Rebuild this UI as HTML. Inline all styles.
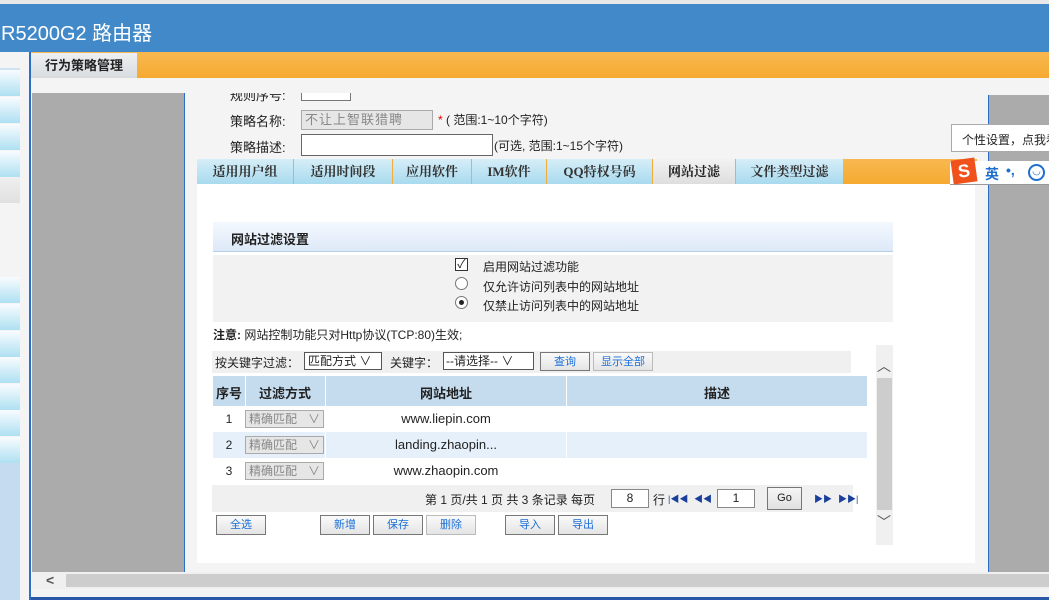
<!DOCTYPE html>
<html><head><meta charset="utf-8"><style>
*{margin:0;padding:0;box-sizing:border-box}
body{width:1049px;height:600px;overflow:hidden;position:relative;background:#f4f4f4;font-family:"Liberation Sans","Noto Sans CJK SC",sans-serif;font-size:12px;color:#222}
.a{position:absolute}
.t{white-space:nowrap}
.side{left:0;width:20px;height:26px;background:linear-gradient(#f8fcff,#aee0f2)}
.tab{top:159px;height:25px;background:linear-gradient(#d6eef8,#a8daee);border-left:1px solid #f2ad3c;font-weight:bold;font-size:13px;color:#333;text-align:center;line-height:25px;font-family:"Liberation Serif","Noto Serif CJK SC",serif}
.btn{top:515px;height:20px;background:linear-gradient(#fafafa,#e4e4e4);border:1px solid #777;color:#1a6fd8;font-size:11px;text-align:center;line-height:18px}
.sel{height:18px;border:1px solid #aaa;background:#e6e6e6;color:#888;font-size:12px;line-height:16px;padding-left:3px}
.sel:after{content:"\2228";position:absolute;right:3px;top:0;color:#888}
.cell{text-align:center;line-height:26px}
</style></head><body>
<div class="a" style="left:0;top:0;width:1049px;height:4px;background:#e8e8e8"></div>
<div class="a" style="left:0;top:4px;width:1049px;height:48px;background:#4189c8"></div>
<div class="a t" style="left:1px;top:17px;font-size:20px;color:#fff">R5200G2 路由器</div>
<!-- sidebar -->
<div class="a" style="left:0;top:68px;width:20px;height:2px;background:#cfe3f2"></div>
<div class="a side" style="top:70px"></div><div class="a side" style="top:97px"></div><div class="a side" style="top:124px"></div><div class="a side" style="top:151px"></div>
<div class="a" style="left:0;top:177px;width:20px;height:26px;background:linear-gradient(#f0f0f0,#e0e0e0)"></div>
<div class="a side" style="top:277px"></div><div class="a side" style="top:304px"></div><div class="a side" style="top:331px"></div><div class="a side" style="top:357px"></div><div class="a side" style="top:384px"></div><div class="a side" style="top:410px"></div><div class="a side" style="top:437px"></div>
<div class="a" style="left:0;top:463px;width:20px;height:137px;background:#c5dcf0"></div>
<div class="a" style="left:29px;top:52px;width:2px;height:548px;background:#2b6fc9"></div>
<!-- top tab -->
<div class="a" style="left:31px;top:52px;width:1018px;height:26px;background:linear-gradient(#f8b850,#f5aa30)"></div>
<div class="a t" style="left:31px;top:53px;width:106px;height:25px;background:linear-gradient(#eef0f2,#d8dcdf);font-weight:bold;font-size:13px;text-align:center;line-height:25px">行为策略管理</div>
<!-- gray panels -->
<div class="a" style="left:32px;top:93px;width:153px;height:479px;background:#ababab;border-right:1px solid #2b6fc9"></div>
<div class="a" style="left:988px;top:95px;width:61px;height:477px;background:#ababab;border-left:1px solid #2b6fc9"></div>
<!-- white panel -->
<div class="a" style="left:197px;top:184px;width:778px;height:379px;background:#fff"></div>
<!-- form -->
<div class="a" style="left:186px;top:78px;width:780px;height:15px;background:#f4f4f4;z-index:2"></div>
<div class="a t" style="left:230px;top:85px;font-size:13px">规则序号:</div>
<div class="a" style="left:301px;top:85px;width:50px;height:16px;border:1px solid #777;border-top:none;background:#fff"></div>
<div class="a t" style="left:230px;top:111px;font-size:13px">策略名称:</div>
<div class="a t" style="left:301px;top:110px;width:132px;height:20px;border:1px solid #aaa;background:#e6e6e6;color:#888;font-size:13px;line-height:18px;padding-left:3px;letter-spacing:1px">不让上智联猎聘</div>
<div class="a t" style="left:438px;top:111px;font-size:12px"><span style="color:#e00">*</span> ( 范围:1~10个字符)</div>
<div class="a t" style="left:230px;top:137px;font-size:13px">策略描述:</div>
<div class="a" style="left:301px;top:134px;width:192px;height:22px;border:1px solid #666;background:#fff"></div>
<div class="a t" style="left:494px;top:137px;font-size:12px">(可选, 范围:1~15个字符)</div>
<!-- tabs -->
<div class="a" style="left:197px;top:159px;width:780px;height:25px;background:linear-gradient(#f8b850,#f5aa30)"></div>
<div class="a tab" style="left:197px;width:96px;border-left:none">适用用户组</div>
<div class="a tab" style="left:293px;width:99px">适用时间段</div>
<div class="a tab" style="left:392px;width:79px">应用软件</div>
<div class="a tab" style="left:471px;width:75px">IM软件</div>
<div class="a tab" style="left:546px;width:106px">QQ特权号码</div>
<div class="a tab" style="left:652px;width:83px;background:linear-gradient(#f2f2f2,#dedede);color:#222">网站过滤</div>
<div class="a tab" style="left:735px;width:108px">文件类型过滤</div>
<!-- section -->
<div class="a" style="left:213px;top:222px;width:680px;height:30px;background:linear-gradient(#f4f8fe,#dde9f8);border-bottom:1px solid #b8cfe8"></div>
<div class="a t" style="left:231px;top:229px;font-weight:bold;font-size:13px">网站过滤设置</div>
<div class="a" style="left:213px;top:255px;width:680px;height:67px;background:#f2f2f2"></div>
<div class="a" style="left:455px;top:258px;width:13px;height:13px;border:1px solid #333;background:#fff;font-size:12px;line-height:11px;text-align:center">✓</div>
<div class="a t" style="left:483px;top:258px">启用网站过滤功能</div>
<div class="a" style="left:455px;top:277px;width:13px;height:13px;border:1px solid #777;border-radius:50%;background:#fff"></div>
<div class="a t" style="left:483px;top:278px">仅允许访问列表中的网站地址</div>
<div class="a" style="left:455px;top:296px;width:13px;height:13px;border:1px solid #777;border-radius:50%;background:#fff"><div class="a" style="left:3px;top:3px;width:5px;height:5px;border-radius:50%;background:#222"></div></div>
<div class="a t" style="left:483px;top:297px">仅禁止访问列表中的网站地址</div>
<div class="a t" style="left:213px;top:326px"><b>注意:</b> 网站控制功能只对Http协议(TCP:80)生效;</div>
<!-- filter -->
<div class="a" style="left:212px;top:351px;width:639px;height:22px;background:#f0f0f0"></div>
<div class="a t" style="left:215px;top:354px">按关键字过滤：</div>
<div class="a t" style="left:304px;top:352px;width:78px;height:18px;border:1px solid #555;background:#fff;line-height:16px;padding-left:3px;font-size:12px">匹配方式 ∨</div>
<div class="a t" style="left:390px;top:354px">关键字：</div>
<div class="a t" style="left:443px;top:352px;width:91px;height:18px;border:1px solid #555;background:#fff;line-height:16px;padding-left:2px;font-size:12px">--请选择-- ∨</div>
<div class="a t btn" style="left:540px;top:352px;width:50px;height:19px">查询</div>
<div class="a t btn" style="left:593px;top:352px;width:60px;height:19px;border-color:#bbb">显示全部</div>
<!-- table -->
<div class="a" style="left:213px;top:376px;width:654px;height:30px;background:#c5dcef"></div>
<div class="a" style="left:245px;top:376px;width:1px;height:30px;background:#fff"></div>
<div class="a" style="left:325px;top:376px;width:1px;height:108px;background:#fff"></div>
<div class="a" style="left:566px;top:376px;width:1px;height:108px;background:#fff"></div>
<div class="a t" style="left:213px;top:383px;width:32px;text-align:center;font-weight:bold;font-size:13px">序号</div>
<div class="a t" style="left:245px;top:383px;width:80px;text-align:center;font-weight:bold;font-size:13px">过滤方式</div>
<div class="a t" style="left:325px;top:383px;width:242px;text-align:center;font-weight:bold;font-size:13px">网站地址</div>
<div class="a t" style="left:567px;top:383px;width:300px;text-align:center;font-weight:bold;font-size:13px">描述</div>
<div class="a" style="left:213px;top:432px;width:654px;height:26px;background:#e6f0fa"></div>
<div class="a" style="left:325px;top:432px;width:1px;height:26px;background:#fff"></div>
<div class="a" style="left:566px;top:432px;width:1px;height:26px;background:#fff"></div>
<div class="a t cell" style="left:213px;top:406px;width:32px">1</div>
<div class="a t sel" style="left:245px;top:410px;width:79px">精确匹配</div>
<div class="a t cell" style="left:325px;top:406px;width:242px;font-size:13px">www.liepin.com</div>
<div class="a t cell" style="left:213px;top:432px;width:32px">2</div>
<div class="a t sel" style="left:245px;top:436px;width:79px">精确匹配</div>
<div class="a t cell" style="left:325px;top:432px;width:242px;font-size:13px">landing.zhaopin...</div>
<div class="a t cell" style="left:213px;top:458px;width:32px">3</div>
<div class="a t sel" style="left:245px;top:462px;width:79px">精确匹配</div>
<div class="a t cell" style="left:325px;top:458px;width:242px;font-size:13px">www.zhaopin.com</div>
<!-- pagination -->
<div class="a" style="left:212px;top:485px;width:641px;height:27px;background:#f0f0f0"></div>
<div class="a t" style="left:425px;top:491px">第 1 页/共 1 页 共 3 条记录 每页</div>
<div class="a t" style="left:611px;top:489px;width:38px;height:19px;border:1px solid #888;background:#fff;text-align:center;line-height:17px">8</div>
<div class="a t" style="left:653px;top:491px">行</div>
<div class="a t" style="left:668px;top:492px;color:#1a3f9a;font-size:9px">|◀◀</div>
<div class="a t" style="left:694px;top:492px;color:#1a3f9a;font-size:9px">◀◀</div>
<div class="a t" style="left:717px;top:489px;width:38px;height:19px;border:1px solid #888;background:#fff;text-align:center;line-height:17px">1</div>
<div class="a t" style="left:767px;top:487px;width:35px;height:23px;border:1px solid #777;background:linear-gradient(#f6f6f6,#e0e0e0);text-align:center;line-height:21px;font-size:11px">Go</div>
<div class="a t" style="left:814px;top:492px;color:#1a3f9a;font-size:9px">▶▶</div>
<div class="a t" style="left:838px;top:492px;color:#1a3f9a;font-size:9px">▶▶|</div>
<!-- buttons -->
<div class="a t btn" style="left:216px;width:50px">全选</div>
<div class="a t btn" style="left:320px;width:50px">新增</div>
<div class="a t btn" style="left:373px;width:50px">保存</div>
<div class="a t btn" style="left:426px;width:50px;border-color:#bbb">删除</div>
<div class="a t btn" style="left:505px;width:50px">导入</div>
<div class="a t btn" style="left:558px;width:50px">导出</div>
<!-- inner scrollbar -->
<div class="a" style="left:876px;top:345px;width:17px;height:200px;background:#f0f0f0"></div>
<div class="a" style="left:877px;top:378px;width:15px;height:132px;background:#cdcdcd"></div>
<div class="a t" style="left:877px;top:356px;font-size:14px;color:#555">︿</div>
<div class="a t" style="left:877px;top:512px;font-size:14px;color:#555">﹀</div>
<!-- bottom scrollbar -->
<div class="a" style="left:32px;top:572px;width:1017px;height:17px;background:#f0f0f0"></div>
<div class="a" style="left:66px;top:574px;width:983px;height:13px;background:#cdcdcd"></div>
<div class="a t" style="left:46px;top:572px;font-size:14px;color:#555;font-weight:bold">&lt;</div>
<div class="a" style="left:31px;top:597px;width:1018px;height:3px;background:#2a56a8"></div>
<!-- IME -->
<div class="a t" style="left:951px;top:124px;width:98px;height:28px;background:#fff;border:1px solid #aaa;border-right:none;padding:6px 0 0 10px;font-size:12px">个性设置，点我看</div>
<div class="a" style="left:950px;top:161px;width:99px;height:24px;background:#fff;border-bottom:1px solid #999"></div>
<div class="a" style="left:952px;top:159px;width:24px;height:24px;background:#f0521c;transform:rotate(-8deg);color:#fff;font-weight:bold;font-size:18px;text-align:center;line-height:24px">S</div>
<div class="a t" style="left:985px;top:164px;color:#1e6fd0;font-weight:bold;font-size:14px">英</div>
<div class="a t" style="left:1006px;top:162px;color:#1e6fd0;font-weight:bold;font-size:14px">•,</div>
<div class="a" style="left:1028px;top:164px;width:17px;height:17px;border:2px solid #1e6fd0;border-radius:50%;color:#1e6fd0;font-size:10px;line-height:12px;text-align:center">◡</div>
</body></html>
